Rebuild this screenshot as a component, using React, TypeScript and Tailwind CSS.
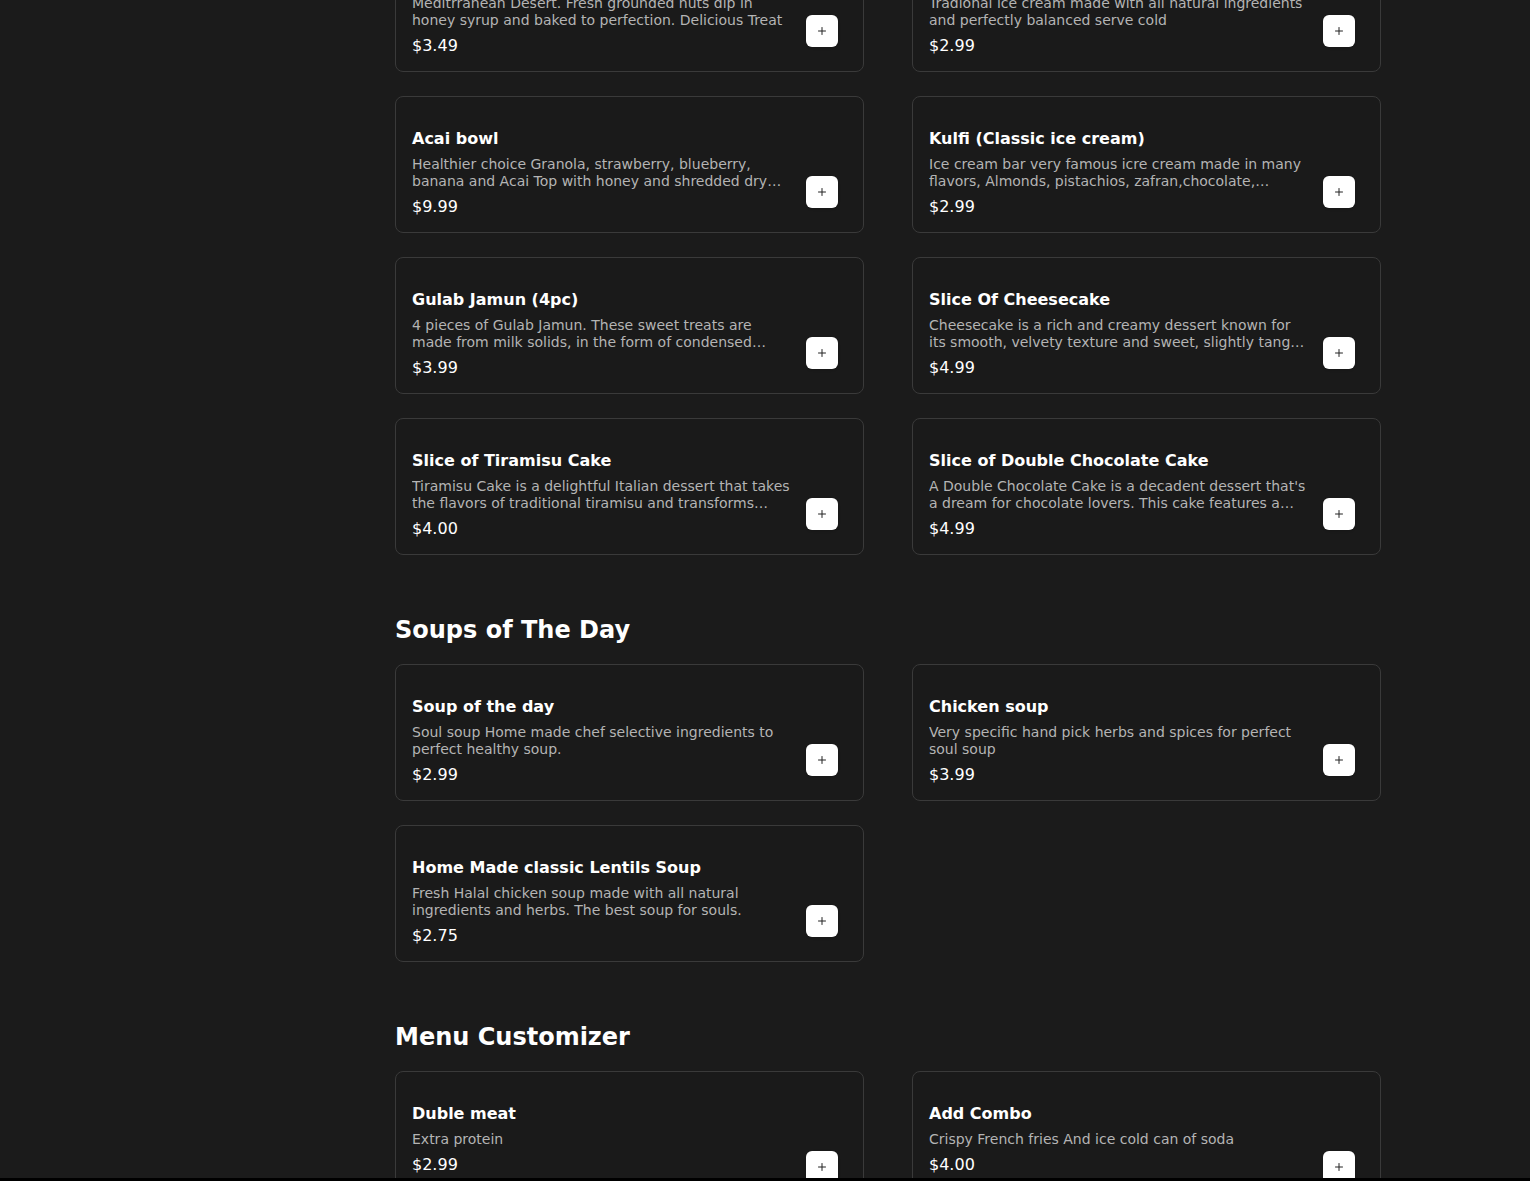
import { Plus } from 'lucide-react'

interface Item {
  name: string
  desc: string
  price: string
}

const desserts: Item[] = [
  {
    name: 'Baklava',
    desc: 'Meditrranean Desert. Fresh grounded nuts dip in honey syrup and baked to perfection. Delicious Treat',
    price: '$3.49',
  },
  {
    name: 'Persian Ice Cream',
    desc: 'Tradional ice cream made with all natural ingredients and perfectly balanced serve cold',
    price: '$2.99',
  },
  {
    name: 'Acai bowl',
    desc: 'Healthier choice Granola, strawberry, blueberry, banana and Acai Top with honey and shredded dry coconut flakes.',
    price: '$9.99',
  },
  {
    name: 'Kulfi (Classic ice cream)',
    desc: 'Ice cream bar very famous icre cream made in many flavors, Almonds, pistachios, zafran,chocolate, mango and more.',
    price: '$2.99',
  },
  {
    name: 'Gulab Jamun (4pc)',
    desc: '4 pieces of Gulab Jamun. These sweet treats are made from milk solids, in the form of condensed milk, then deep fried and soaked in syrup.',
    price: '$3.99',
  },
  {
    name: 'Slice Of Cheesecake',
    desc: 'Cheesecake is a rich and creamy dessert known for its smooth, velvety texture and sweet, slightly tangy flavor.',
    price: '$4.99',
  },
  {
    name: 'Slice of Tiramisu Cake',
    desc: 'Tiramisu Cake is a delightful Italian dessert that takes the flavors of traditional tiramisu and transforms them into a cake.',
    price: '$4.00',
  },
  {
    name: 'Slice of Double Chocolate Cake',
    desc: "A Double Chocolate Cake is a decadent dessert that's a dream for chocolate lovers. This cake features a moist chocolate sponge.",
    price: '$4.99',
  },
]

const soups: Item[] = [
  {
    name: 'Soup of the day',
    desc: 'Soul soup Home made chef selective ingredients to perfect healthy soup.',
    price: '$2.99',
  },
  {
    name: 'Chicken soup',
    desc: 'Very specific hand pick herbs and spices for perfect soul soup',
    price: '$3.99',
  },
  {
    name: 'Home Made classic Lentils Soup',
    desc: 'Fresh Halal chicken soup made with all natural ingredients and herbs. The best soup for souls.',
    price: '$2.75',
  },
]

const extras: Item[] = [
  { name: 'Duble meat', desc: 'Extra protein', price: '$2.99' },
  { name: 'Add Combo', desc: 'Crispy French fries And ice cold can of soda', price: '$4.00' },
]

function MenuCard({ item }: { item: Item }) {
  return (
    <div className="h-[137px] rounded-lg border border-[#3a3a3a] bg-[#1a1a1a] pl-4 pr-[25px] pt-[30px] flex items-start gap-4">
      <div className="flex-1 min-w-0">
        <h3 className="text-base leading-6 font-bold text-white">{item.name}</h3>
        <p className="mt-[5px] text-sm leading-[17px] text-[#b4b4b4] line-clamp-2">{item.desc}</p>
        <p className="mt-[5px] text-base leading-6 text-white">{item.price}</p>
      </div>
      <button className="mt-[49px] h-8 w-8 shrink-0 rounded-md bg-white flex items-center justify-center shadow-sm">
        <Plus className="h-3 w-3 text-[#222]" strokeWidth={2} />
      </button>
    </div>
  )
}

function Grid({ items }: { items: Item[] }) {
  return (
    <div className="grid grid-cols-2 gap-x-12 gap-y-6">
      {items.map((it) => (
        <MenuCard key={it.name} item={it} />
      ))}
    </div>
  )
}

export default function App() {
  return (
    <div className="h-[1181px] bg-black" style={{ fontFamily: '"DejaVu Sans", Verdana, sans-serif' }}>
      <div className="h-[1178px] overflow-hidden bg-[#1b1b1b] flex">
        <div className="w-[395px] shrink-0" />
        <main className="w-[986px] -mt-[65px]">
          <Grid items={desserts} />

          <h2 className="mt-[59px] mb-[18px] text-2xl leading-8 font-bold text-white">Soups of The Day</h2>
          <Grid items={soups} />

          <h2 className="mt-[59px] mb-[18px] text-2xl leading-8 font-bold text-white">Menu Customizer</h2>
          <Grid items={extras} />
        </main>
      </div>
    </div>
  )
}
